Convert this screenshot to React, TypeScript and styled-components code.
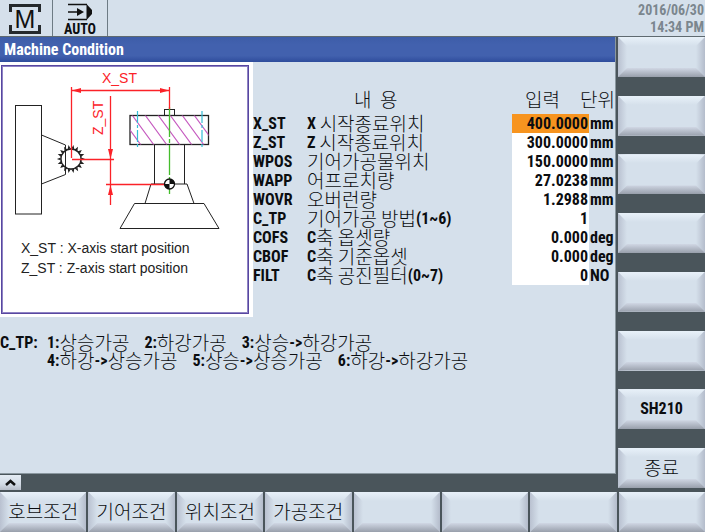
import React from "react";
import styled, { createGlobalStyle } from "styled-components";

const PANEL = "#d5e0eb";
const SLATE = "#4a555b";
const LATIN = '"Liberation Sans Narrow", "Arial Narrow", "Roboto Condensed", "Liberation Sans"';

const GlobalStyle = createGlobalStyle`
  * { box-sizing: border-box; }
  body {
    margin: 0;
    background: ${SLATE};
    color: #0b0d10;
    font-family: ${LATIN}, "Noto Sans CJK KR", sans-serif;
    font-size: 16px;
    font-weight: 700;
  }
`;

const Screen = styled.div`
  min-height: 100vh;
  display: grid;
  grid-template-rows: 37px 1fr 40px;
`;

const StatusBar = styled.header`
  display: flex;
  background: ${PANEL};
  border-bottom: 1px solid #5f6a70;
`;

const StatusCell = styled.div<{ $width: number }>`
  width: ${(p) => p.$width}px;
  display: flex;
  flex-direction: column;
  align-items: center;
  justify-content: flex-end;
  gap: 1px;
  border-right: 1px solid #6d7b84;
`;

const ModeName = styled.span`
  font-size: 14px;
  line-height: 14px;
`;

const Clock = styled.time`
  margin-left: auto;
  padding: 2px 1px 0 0;
  color: #7b868e;
  text-align: right;
  font-size: 14px;
  line-height: 17px;
  white-space: pre-line;
`;

const Body = styled.div`
  display: grid;
  grid-template-columns: 1fr 89px;
`;

const Main = styled.main`
  display: flex;
  flex-direction: column;
  min-width: 0;
`;

const Panel = styled.section`
  flex: 1;
  background: ${PANEL};
  border-right: 1px solid #8a979f;
  border-bottom: 1px solid #8a979f;
`;

const Title = styled.h1`
  margin: 0;
  padding-left: 4px;
  height: 25px;
  line-height: 26px;
  font-size: 16px;
  color: #fff;
  background: linear-gradient(#3d5da8, #4261ae 30%, #4261ae 75%, #2e4c9c);
`;

const Content = styled.div`
  display: grid;
  grid-template-columns: 253px 1fr;
  align-items: start;
`;

const Figure = styled.figure`
  margin: 0;
  padding: 3px 4px 3px 1px;
  background: #fff;
`;

const Frame = styled.div`
  border: 1px solid #5847a0;
  outline: 1px solid #8f83c4;
  outline-offset: -2px;

  svg {
    display: block;
    width: 100%;
  }
`;

const Params = styled.table`
  width: 100%;
  margin-top: 28px;
  border-collapse: collapse;
  table-layout: fixed;

  th, td {
    padding: 0;
    height: 19px;
    line-height: 19px;
    text-align: left;
    white-space: nowrap;
  }
  thead th { height: 24px; line-height: 20px; vertical-align: top; }
  tbody th { font-weight: 700; }
`;

const Col = styled.col<{ $width?: number }>`
  width: ${(p) => (p.$width ? `${p.$width}px` : "auto")};
`;

const HeadCell = styled.th<{ $indent: number }>`
  && { padding-left: ${(p) => p.$indent}px; }
`;

const HeadPair = styled.div`
  display: flex;
  justify-content: space-between;
`;

const UnitCell = styled.td`
  && { padding-left: 1px; }
`;

const ValueInput = styled.input<{ $active: boolean }>`
  display: block;
  width: 100%;
  height: 19px;
  padding: 0 1px 0 0;
  border: 0;
  border-radius: 0;
  outline: 0;
  background: ${(p) => (p.$active ? "#f7941f" : "#fff")};
  color: inherit;
  font: inherit;
  text-align: right;
`;

const Hangul = styled.span`
  font-family: "Noto Sans CJK KR", sans-serif;
  font-size: 19px;
  font-weight: 300;
  line-height: 0;
  vertical-align: -2px;
  white-space: pre;
`;

const Legend = styled.div`
  margin-top: 17px;
  display: grid;
  grid-template-columns: 47px 1fr;
  line-height: 18px;
`;

const LegendRow = styled.div`
  display: flex;
  gap: 15px;
  grid-column: 2;
  white-space: nowrap;
`;

const LegendName = styled.div`
  grid-row: 1;
`;

const Strip = styled.div`
  height: 18px;
  padding-top: 1px;
  background: ${SLATE};
`;

const bevelGradient = "linear-gradient(90deg, #b9c1d0, #d5e0eb 9px, #d5e0eb calc(100% - 9px), #b4bccb)";

const RecallButton = styled.button`
  display: flex;
  align-items: center;
  justify-content: center;
  width: 21px;
  height: 15px;
  padding: 0;
  border: 0;
  background: linear-gradient(#e4ecf4, #d3dbe5 60%, #b7bdc8);
`;

const SoftKey = styled.button`
  position: relative;
  min-width: 0;
  height: 40px;
  padding: 0;
  border: 0;
  background: ${bevelGradient};
  color: inherit;
  font: inherit;
  line-height: 40px;
  white-space: nowrap;

  &::before,
  &::after {
    content: "";
    position: absolute;
    left: 0;
    right: 0;
    height: 9px;
  }
  &::before {
    top: 0;
    background: linear-gradient(#e8f1f9, #d5e0eb);
    clip-path: polygon(0 0, 100% 0, calc(100% - 9px) 100%, 9px 100%);
  }
  &::after {
    bottom: 0;
    background: linear-gradient(#d0d7e4, #989fab);
    clip-path: polygon(9px 0, calc(100% - 9px) 0, 100% 100%, 0 100%);
  }
`;

const KeyLabel = styled.span`
  position: relative;
  z-index: 1;
`;

const SideKeys = styled.nav`
  display: flex;
  flex-direction: column;
  justify-content: space-between;
  padding: 0 0 4px 2px;
`;

const BottomKeys = styled.nav`
  display: grid;
  grid-template-columns: repeat(8, 1fr);
  gap: 2px;
`;

function Text({ children }: { children: string }) {
  return (
    <>
      {children.split(/([\uac00-\ud7a3]+(?: +[\uac00-\ud7a3]+)*)/).map((run, i) =>
        i % 2 ? <Hangul key={i}>{run}</Hangul> : run
      )}
    </>
  );
}

const params = [
  { code: "X_ST", name: "X 시작종료위치", value: "400.0000", unit: "mm" },
  { code: "Z_ST", name: "Z 시작종료위치", value: "300.0000", unit: "mm" },
  { code: "WPOS", name: "기어가공물위치", value: "150.0000", unit: "mm" },
  { code: "WAPP", name: "어프로치량", value: "27.0238", unit: "mm" },
  { code: "WOVR", name: "오버런량", value: "1.2988", unit: "mm" },
  { code: "C_TP", name: "기어가공 방법(1~6)", value: "1", unit: "" },
  { code: "COFS", name: "C축 옵셋량", value: "0.000", unit: "deg" },
  { code: "CBOF", name: "C축 기준옵셋", value: "0.000", unit: "deg" },
  { code: "FILT", name: "C축 공진필터(0~7)", value: "0", unit: "NO" },
];

const legend = [
  ["1:상승가공", "2:하강가공", "3:상승->하강가공"],
  ["4:하강->상승가공", "5:상승->상승가공", "6:하강->하강가공"],
];

const sideKeys = ["", "", "", "", "", "", "SH210", "종료"];
const bottomKeys = ["호브조건", "기어조건", "위치조건", "가공조건", "", "", "", ""];

const teeth = Array.from({ length: 18 }, (_, i) => {
  const a = (i * Math.PI) / 9;
  const at = (r: number, d: number) =>
    `${(71 + r * Math.cos(a + d)).toFixed(1)} ${(159 + r * Math.sin(a + d)).toFixed(1)}`;
  return `M${at(10, -0.1)} L${at(12.5, 0)} L${at(10, 0.1)}`;
}).join(" ");

function MachineIcon() {
  return (
    <svg width="36" height="34" viewBox="0 0 36 34" aria-label="Machine">
      <path d="M2.500 10V3.500H31.500V10M2.500 23V30.500H31.500V23" fill="none" stroke="#25292c" strokeWidth="3" />
      <text x="17" y="26" textAnchor="middle" fontFamily="Liberation Sans" fontSize="25" fontWeight="400" fill="#111">
        M
      </text>
    </svg>
  );
}

function AutoIcon() {
  return (
    <svg width="28" height="18" viewBox="0 0 28 18" aria-hidden="true">
      <path d="M2 1.500H21M2 16.500H21M2 9H13" fill="none" stroke="#111" strokeWidth="1.300" />
      <path d="M11 5L18 9L11 13Z" fill="#111" />
      <path d="M20.500 1L26 7V11L20.500 17Z" fill="#111" />
    </svg>
  );
}

function AxisDrawing() {
  return (
    <svg viewBox="2 66 246 247" role="img" aria-label="Axis start positions">
      <clipPath id="disc">
        <rect x="130" y="115.500" width="78.500" height="29" />
      </clipPath>
      <g fill="none" stroke="#222" strokeWidth="1">
        <rect x="15.500" y="105.500" width="26" height="108.500" />
        <path d="M41.500 135L65.500 145V174.500L41.500 184" />
        <circle cx="71" cy="159" r="10" strokeWidth="1.300" />
        <path d={teeth} strokeWidth="1.200" />
        <rect x="164.500" y="109.500" width="10" height="6" />
        <rect x="130" y="115.500" width="78.500" height="29" strokeWidth="1.300" />
        <path d="M154.500 144.500V184M184.500 144.500V184" />
        <path d="M151 184H187L194 203.500H145Z" />
        <path d="M134.500 203.500H204L219 228.500H120Z" />
      </g>
      <path
        clipPath="url(#disc)"
        d="M119 115L141 145M132 115L154 145M145 115L167 145M158 115L180 145M170 115L192 145M182 115L204 145M194 115L216 145"
        stroke="#c65cc0"
        strokeWidth="1.200"
      />
      <path d="M137.500 111V148M202 111V148" stroke="#35bcd6" strokeWidth="1.200" strokeDasharray="12 2 3 2" />
      <path d="M169.500 107V194" stroke="#45bd2c" strokeWidth="1.300" strokeDasharray="30 2 4 2" />
      <g stroke="#fb2228" strokeWidth="1.300" fill="none">
        <path d="M71.500 87V158M169.500 87V109M71 90.500H170M110.500 96V205M72 159.500H114M106 184.500H166" />
      </g>
      <path
        fill="#fb2228"
        d="M72 90.500L81 88V93ZM169 90.500L160 88V93ZM110.500 159L108 149H113ZM110.500 185L108 195H113Z"
      />
      <circle cx="169.500" cy="184" r="5" fill="#fff" stroke="#111" strokeWidth="1.300" />
      <path d="M169.500 184V179A5 5 0 0 1 174.500 184ZM169.500 184V189A5 5 0 0 1 164.500 184Z" fill="#111" />
      <g fontFamily="Liberation Sans" fontWeight="400" fontSize="14">
        <text x="102" y="83" fill="#fb2228">X_ST</text>
        <text transform="translate(103 135) rotate(-90)" fill="#fb2228">Z_ST</text>
        <text x="21" y="253" fill="#222">X_ST : X-axis start position</text>
        <text x="21" y="273" fill="#222">Z_ST : Z-axis start position</text>
      </g>
    </svg>
  );
}

export default function App() {
  return (
    <Screen>
      <GlobalStyle />
      <StatusBar>
        <StatusCell $width={53}>
          <MachineIcon />
        </StatusCell>
        <StatusCell $width={55}>
          <AutoIcon />
          <ModeName>AUTO</ModeName>
        </StatusCell>
        <Clock>{"2016/06/30\n14:34 PM"}</Clock>
      </StatusBar>
      <Body>
        <Main>
          <Panel>
            <Title>Machine Condition</Title>
            <Content>
              <Figure>
                <Frame>
                  <AxisDrawing />
                </Frame>
              </Figure>
              <Params>
                <colgroup>
                  <Col $width={54} />
                  <Col />
                  <Col $width={77} />
                  <Col $width={26} />
                </colgroup>
                <thead>
                  <tr>
                    <th />
                    <HeadCell $indent={47}><Text>내  용</Text></HeadCell>
                    <HeadCell $indent={13} colSpan={2}>
                      <HeadPair>
                        <span><Text>입력</Text></span>
                        <span><Text>단위</Text></span>
                      </HeadPair>
                    </HeadCell>
                  </tr>
                </thead>
                <tbody>
                  {params.map((p, i) => (
                    <tr key={p.code}>
                      <th scope="row">{p.code}</th>
                      <td><Text>{p.name}</Text></td>
                      <td>
                        <ValueInput aria-label={p.code} defaultValue={p.value} $active={i === 0} />
                      </td>
                      <UnitCell>{p.unit}</UnitCell>
                    </tr>
                  ))}
                </tbody>
              </Params>
            </Content>
            <Legend>
              <LegendName>C_TP:</LegendName>
              {legend.map((row, i) => (
                <LegendRow key={i}>
                  {row.map((item) => (
                    <span key={item}><Text>{item}</Text></span>
                  ))}
                </LegendRow>
              ))}
            </Legend>
          </Panel>
          <Strip>
            <RecallButton aria-label="Recall">
              <svg width="11" height="7" viewBox="0 0 11 7" aria-hidden="true">
                <path d="M1 6L5.500 2L10 6" fill="none" stroke="#111" strokeWidth="2.500" />
              </svg>
            </RecallButton>
          </Strip>
        </Main>
        <SideKeys aria-label="Vertical soft keys">
          {sideKeys.map((label, i) => (
            <SoftKey key={i}><KeyLabel><Text>{label}</Text></KeyLabel></SoftKey>
          ))}
        </SideKeys>
      </Body>
      <BottomKeys aria-label="Horizontal soft keys">
        {bottomKeys.map((label, i) => (
          <SoftKey key={i}><KeyLabel><Text>{label}</Text></KeyLabel></SoftKey>
        ))}
      </BottomKeys>
    </Screen>
  );
}
